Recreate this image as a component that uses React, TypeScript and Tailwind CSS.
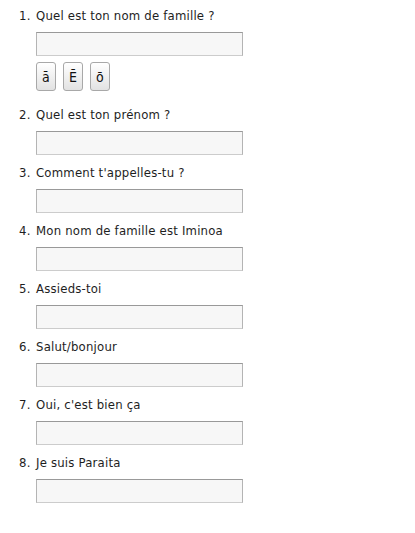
const questions = [
  "Quel est ton nom de famille ?",
  "Quel est ton prénom ?",
  "Comment t'appelles-tu ?",
  "Mon nom de famille est Iminoa",
  "Assieds-toi",
  "Salut/bonjour",
  "Oui, c'est bien ça",
  "Je suis Paraita",
];

const macrons = ["ā", "Ē", "ō"];

function Field() {
  return (
    <input
      type="text"
      className="mt-2 block h-[24px] w-[207px] border border-[#b4b4b4] border-t-[#999] border-b-[#cccccc] bg-[#f7f7f7] px-1 text-[13px] outline-none"
    />
  );
}

export default function App() {
  return (
    <div className="min-h-screen bg-white pt-[8px] text-[13px] leading-[16px] tracking-[0.2px] text-[#1e1e1e] [font-family:'DejaVu_Sans_Condensed','DejaVu_Sans',sans-serif]">
      <ol>
        {questions.map((q, i) => (
          <li key={i} className={i === 0 ? "mb-[16px] flex" : "mb-[10px] flex"}>
            <div className="w-[36px] shrink-0 pl-[19px]">{i + 1}.</div>
            <div>
              <div>{q}</div>
              <Field />
              {i === 0 && (
                <div className="mt-[6px] flex gap-[7px]">
                  {macrons.map((m) => (
                    <button
                      key={m}
                      type="button"
                      className="h-[29px] w-[20px] rounded-[3px] border border-[#a8a8a8] bg-gradient-to-b from-white to-[#e2e2e2] p-0 text-[14px] text-[#111]"
                    >
                      {m}
                    </button>
                  ))}
                </div>
              )}
            </div>
          </li>
        ))}
      </ol>
    </div>
  );
}
